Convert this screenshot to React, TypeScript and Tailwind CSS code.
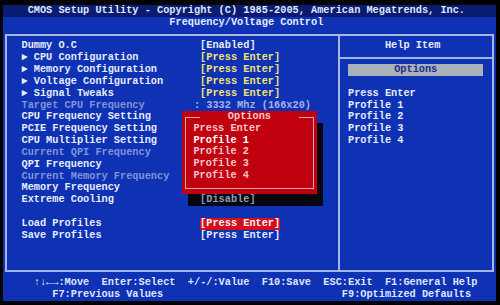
import React from "react";

type Tone = "white" | "yellow" | "dim" | "hot";

interface Item {
  label: string;
  arrow?: boolean;
  dim?: boolean;
  value?: string;
  tone?: Tone;
}

// one text row of the 80x25 screen
const ROW = "h-[11.83px] whitespace-pre";

const items: (Item | null)[] = [
  { label: "Dummy O.C", value: "[Enabled]", tone: "white" },
  { label: "CPU Configuration", arrow: true, value: "[Press Enter]", tone: "yellow" },
  { label: "Memory Configuration", arrow: true, value: "[Press Enter]", tone: "yellow" },
  { label: "Voltage Configuration", arrow: true, value: "[Press Enter]", tone: "yellow" },
  { label: "Signal Tweaks", arrow: true, value: "[Press Enter]", tone: "yellow" },
  { label: "Target CPU Frequency", dim: true, value: ": 3332 Mhz (166x20)", tone: "dim" },
  { label: "CPU Frequency Setting" },
  { label: "PCIE Frequency Setting" },
  { label: "CPU Multiplier Setting" },
  { label: "Current QPI Frequency", dim: true },
  { label: "QPI Frequency" },
  { label: "Current Memory Frequency", dim: true },
  { label: "Memory Frequency" },
  { label: "Extreme Cooling" },
  null,
  { label: "Load Profiles", value: "[Press Enter]", tone: "hot" },
  { label: "Save Profiles", value: "[Press Enter]", tone: "white" },
];

const toneClass: Record<Tone, string> = {
  white: "text-[#e6ecfd]",
  yellow: "text-[#f1e374]",
  dim: "text-[#a3b3e6] -ml-[1ch]",
  hot: "bg-[#d0101c] text-[#fff4f4]",
};

const profiles = ["Profile 1", "Profile 2", "Profile 3", "Profile 4"];

function OptionsPopup() {
  return (
    <>
      {/* shadow, the covered value still shows through dimmed */}
      <div className="absolute top-[87.71px] left-[29ch] w-[22ch] h-[82.81px] bg-[#05070c] flex flex-col justify-end">
        <div className={`${ROW} pl-[2ch] text-[#8d9ab8]`}>[Disable]</div>
      </div>
      <div className="absolute top-[75.88px] left-[28ch] w-[22ch] h-[82.81px] bg-[#c1000f] px-[3px]">
        <div className="mt-[5.2px] h-[72.4px] border-[1.5px] border-[#dca6b0]">
          <div className={`${ROW} -mt-[6.7px] flex justify-center`}>
            <span className="w-[16ch] bg-[#c1000f] text-center text-[#f4cbd1]">Options</span>
          </div>
          <div className={`${ROW} pl-[calc(2ch_-_4.5px)] text-[#f3c6cd]`}>Press Enter</div>
          {profiles.map((p, i) => (
            <div
              key={p}
              className={`${ROW} pl-[calc(2ch_-_4.5px)] ${i === 0 ? "text-white" : "text-[#f3c6cd]"}`}
            >
              {p}
            </div>
          ))}
        </div>
      </div>
    </>
  );
}

export default function App() {
  return (
    <div className="w-[500px] h-[305px] bg-black overflow-hidden pt-[5px]">
      <div
        className="ml-[3px] w-[80ch] bg-[#0f31b3] text-[#e6ecfd] text-[10.27px] leading-[11.83px] font-bold"
        style={{ fontFamily: '"Liberation Mono", "DejaVu Sans Mono", monospace' }}
      >
        {/* title rows */}
        <div className={`${ROW} bg-[#0a1b72] pl-[4ch] text-[#dfe6ff]`}>
          CMOS Setup Utility - Copyright (C) 1985-2005, American Megatrends, Inc.
        </div>
        <div className={`${ROW} pl-[27ch]`}>Frequency/Voltage Control</div>

        {/* main frame, rows 2..22 */}
        <div className="ml-[calc(0.5ch_-_1px)] w-[calc(79ch_+_2px)] my-[4.9px] border-2 border-[#a4b5e6] flex pl-[calc(0.5ch_-_1px)]">
          <div className="relative w-[calc(53.5ch_-_1px)] py-[4.9px] h-[234.57px]">
            {items.map((it, i) =>
              it ? (
                <div key={i} className={`${ROW} flex pl-[2ch]`}>
                  <span className={`w-[29ch] ${it.dim ? "text-[#7f95d8]" : "text-[#e6ecfd]"}`}>
                    {it.arrow ? `\u25BA ${it.label}` : it.label}
                  </span>
                  {it.value && <span className={toneClass[it.tone ?? "white"]}>{it.value}</span>}
                </div>
              ) : (
                <div key={i} className={ROW} />
              )
            )}
            <OptionsPopup />
          </div>

          <div className="flex-1 border-l-2 border-[#a4b5e6] py-[4.9px]">
            <div className={`${ROW} pl-[calc(7.5ch_-_1px)]`}>Help Item</div>
            <div className={`${ROW} flex items-center`}>
              <div className="h-[2px] w-full bg-[#a4b5e6]" />
            </div>
            <div className={`${ROW} ml-[calc(1.5ch_-_1px)] w-[22ch] bg-[#a9b1b9] text-center text-[#1b2b8e]`}>
              Options
            </div>
            <div className={ROW} />
            <div className={`${ROW} pl-[calc(1.5ch_-_1px)]`}>Press Enter</div>
            {profiles.map((p) => (
              <div key={p} className={`${ROW} pl-[calc(1.5ch_-_1px)]`}>
                {p}
              </div>
            ))}
          </div>
        </div>

        {/* key help */}
        <div className={`${ROW} pl-[5ch] text-[#dfe6ff]`}>
          {"↑↓←→:Move  Enter:Select  +/-/:Value  F10:Save  ESC:Exit  F1:General Help"}
        </div>
        <div className={`${ROW} pl-[8ch] text-[#dfe6ff]`}>
          {"F7:Previous Values                             F9:Optimized Defaults"}
        </div>
      </div>
    </div>
  );
}
